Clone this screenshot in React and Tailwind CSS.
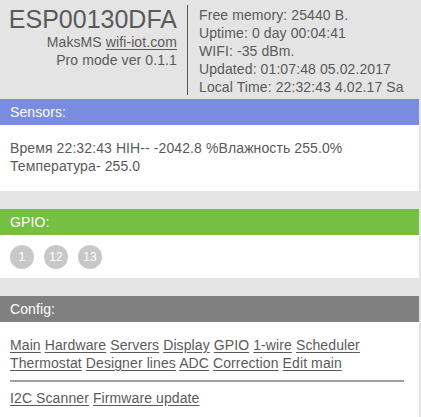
import React from 'react';

// header info lines on the right
const info = [
  'Free memory: 25440 B.',
  'Uptime: 0 day 00:04:41',
  'WIFI: -35 dBm.',
  'Updated: 01:07:48 05.02.2017',
  'Local Time: 22:32:43 4.02.17 Sa',
];

const configLinks = [
  'Main', 'Hardware', 'Servers', 'Display', 'GPIO', '1-wire', 'Scheduler',
  'Thermostat', 'Designer lines', 'ADC', 'Correction', 'Edit main',
];

function Bar({ color, children }) {
  return (
    <div className={`${color} h-[26px] px-[10px] pt-[4px] text-[14px] leading-[18px] text-white`}>
      {children}
    </div>
  );
}

export default function App() {
  return (
    <div className="min-h-[417px] w-[421px] bg-[#e4e4e4] text-[#5a5a5a] tracking-[0.1px] font-['Liberation_Sans',Arial,sans-serif]">
      {/* Header */}
      <div className="flex h-[99px]">
        <div className="w-[177px] pt-[6px] text-right">
          <div className="text-[25px] leading-[27px] tracking-normal">ESP00130DFA</div>
          <div className="text-[14px] leading-[18px]">
            MaksMS <span className="underline underline-offset-2">wifi-iot.com</span>
          </div>
          <div className="text-[14px] leading-[18px]">Pro mode ver 0.1.1</div>
        </div>
        <div className="ml-[10px] mt-[5px] h-[90px] border-l border-[#555] pl-[11px] pt-[1px] text-[14px] leading-[18px]">
          {info.map((line) => (
            <div key={line} className="whitespace-nowrap">{line}</div>
          ))}
        </div>
      </div>

      {/* Sensors */}
      <div className="mr-[2px]">
        <Bar color="bg-[#7a8ce0]">Sensors:</Bar>
        <div className="bg-white px-[10px] pt-[14px] pb-[16px] text-[14px] leading-[18px]">
          <div>Время 22:32:43 HIH-- -2042.8 %Влажность 255.0%</div>
          <div>Температура- 255.0</div>
        </div>
      </div>

      {/* GPIO */}
      <div className="mt-[18px] mr-[2px]">
        <Bar color="bg-[#75c043]">GPIO:</Bar>
        <div className="flex gap-[10px] bg-white px-[10px] pt-[10px] pb-[9px]">
          {['1', '12', '13'].map((n) => (
            <div
              key={n}
              className="flex h-[24px] w-[24px] items-center justify-center rounded-full bg-[#c8c8c8] text-[12px] text-white"
            >
              {n}
            </div>
          ))}
        </div>
      </div>

      {/* Config */}
      <div className="mt-[18px] mr-[2px]">
        <Bar color="bg-[#808080]">Config:</Bar>
        <div className="bg-white pl-[10px] pr-[15px] pt-[14px] pb-[14px] text-[14px] leading-[18px]">
          <div className="pr-[40px]">
            {configLinks.map((l, i) => (
              <React.Fragment key={l}>
                <a href="#" className="underline underline-offset-2">{l}</a>
                {i < configLinks.length - 1 ? ' ' : ''}
              </React.Fragment>
            ))}
          </div>
          <hr className="mt-[8px] mb-[7px] border-t-[2px] border-[#a0a0a0]" />
          <div>
            <a href="#" className="underline underline-offset-2">I2C Scanner</a>{' '}
            <a href="#" className="underline underline-offset-2">Firmware update</a>
          </div>
        </div>
      </div>
    </div>
  );
}
